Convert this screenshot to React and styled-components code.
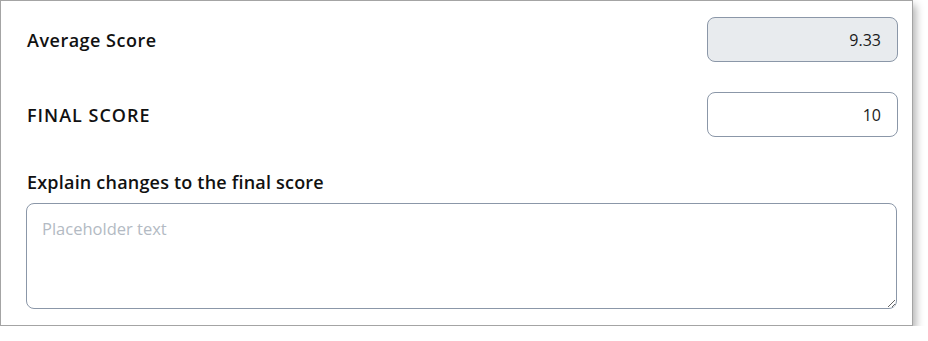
import React, { useState } from 'react';
import styled, { createGlobalStyle } from 'styled-components';

const GlobalStyle = createGlobalStyle`
  html, body {
    margin: 0;
    padding: 0;
    background: #fff;
  }
  body {
    font-family: "Open Sans", "Liberation Sans", sans-serif;
  }
`;

const App = () => {
  const [finalScore, setFinalScore] = useState('10');
  const [note, setNote] = useState('');

  return (
    <>
      <GlobalStyle />
      <Panel>
        <ScoreRow>
          <Label spacing="0.5px">Average Score</Label>
          <ScoreInput type="text" value="9.33" readOnly disabled />
        </ScoreRow>
        <ScoreRow>
          <Label spacing="1px">FINAL SCORE</Label>
          <ScoreInput
            type="text"
            value={finalScore}
            onChange={(e) => setFinalScore(e.target.value)}
          />
        </ScoreRow>
        <Field>
          <Label spacing="0.2px">Explain changes to the final score</Label>
          <TextArea
            value={note}
            onChange={(e) => setNote(e.target.value)}
            placeholder="Placeholder text"
          />
        </Field>
      </Panel>
    </>
  );
};

const Panel = styled.div`
  box-sizing: border-box;
  width: 913px;
  height: 326px;
  padding: 16px 14px 16px 25px;
  border: 1px solid #a4a4a4;
  background: #fff;
  box-shadow: 3px 5px 8px rgba(0, 0, 0, 0.3);
  display: flex;
  flex-direction: column;
  gap: 30px;
`;

const ScoreRow = styled.div`
  display: flex;
  align-items: center;
  justify-content: space-between;
  height: 45px;
`;

const Label = styled.label`
  padding-left: 1px;
  font-size: 18px;
  font-weight: 600;
  line-height: 24px;
  letter-spacing: ${({ spacing }) => spacing || '0'};
  color: #111;
`;

const ScoreInput = styled.input`
  box-sizing: border-box;
  width: 191px;
  height: 45px;
  padding: 0 16px;
  border: 1px solid #8b97a8;
  border-radius: 8px;
  background: ${({ disabled }) => (disabled ? '#e8ebee' : '#fff')};
  color: #1a1a1a;
  -webkit-text-fill-color: #1a1a1a;
  opacity: 1;
  font-family: "Open Sans", "Liberation Sans", sans-serif;
  font-size: 16px;
  text-align: right;
  outline: none;
`;

const Field = styled.div`
  display: flex;
  flex-direction: column;
  gap: 9px;
  margin-top: 3px;
`;

const TextArea = styled.textarea`
  box-sizing: border-box;
  width: 871px;
  height: 106px;
  padding: 13px 15px;
  border: 1px solid #8b97a8;
  border-radius: 8px;
  font-family: "Open Sans", "Liberation Sans", sans-serif;
  font-size: 16.5px;
  color: #1a1a1a;
  outline: none;
  resize: vertical;
  &::placeholder {
    color: #b3bac3;
  }
`;

export default App;
